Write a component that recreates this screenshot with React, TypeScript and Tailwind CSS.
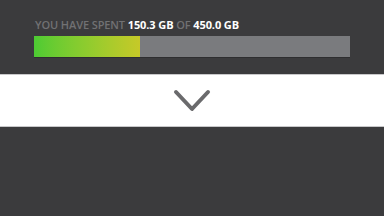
export default function App() {
  return (
    <div className="w-[384px] h-[216px] bg-[#3b3b3d] flex flex-col overflow-hidden" style={{ fontFamily: '"Open Sans", sans-serif' }}>
      {/* USAGE */}
      <div className="h-[74px] px-[34px] pt-[18px] flex flex-col">
        <div className="text-[11px] leading-[14px] font-semibold tracking-[-0.1px] pl-[1px]">
          <span className="text-[#717173]">YOU HAVE SPENT </span>
          <span className="text-white font-bold">150.3 GB</span>
          <span className="text-[#717173]"> OF </span>
          <span className="text-white font-bold">450.0 GB</span>
        </div>
        <div className="mt-[4px] w-[316px] h-[21px] bg-[#7a7b7e] flex shadow-[0_1px_0_#2e2e30]">
          <div className="w-[106px] h-full bg-gradient-to-r from-[#4ccb33] via-[#8fcc2e] to-[#c6c928]" />
        </div>
      </div>

      {/* TOGGLE */}
      <div className="h-[53px] bg-white border-t border-b border-[#c8c8ca] flex items-center justify-center">
        <svg width="38" height="24" viewBox="0 0 38 24" className="mt-[1px]">
          <path d="M3 3 L19 20 L35 3" fill="none" stroke="#6a6a6c" strokeWidth="4" strokeLinecap="round" strokeLinejoin="round" />
        </svg>
      </div>
    </div>
  );
}
